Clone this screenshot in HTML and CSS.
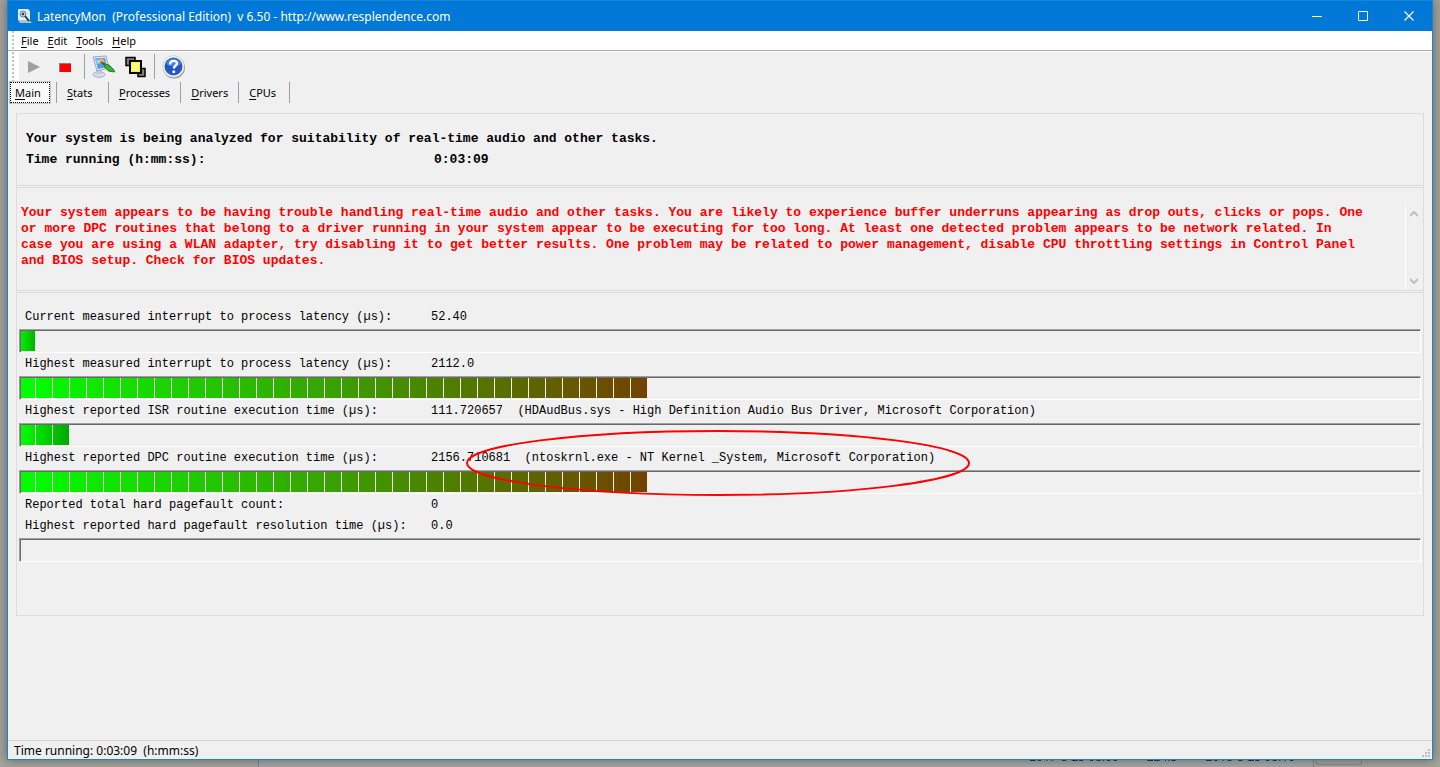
FILE: index.html
```html
<!DOCTYPE html>
<html lang="en">
<head>
<meta charset="utf-8">
<title>LatencyMon</title>
<link rel="stylesheet" href="styles.css">
</head>
<body>
<div class="window">
  <header class="titlebar">
    <svg class="app-icon" viewBox="0 0 16 16" width="16" height="16" aria-hidden="true">
      <path d="M1 1h10l2 2v9H1z" fill="#e4eef6"/>
      <path d="M1 12h11l3 3H3z" fill="#a9c3da"/>
      <circle cx="6" cy="6" r="3" fill="#b9cad9" stroke="#6f879c"/>
      <circle cx="6" cy="6" r="1.200" fill="#25384a"/>
      <path d="M8 8l4 5" stroke="#27384b" stroke-width="2"/>
    </svg>
    <h1 class="title">LatencyMon&nbsp; (Professional Edition)&nbsp; v 6.50 - http://www.resplendence.com</h1>
    <div class="window-buttons">
      <button class="window-button" aria-label="Minimize"><svg width="11" height="11" viewBox="0 0 11 11"><path d="M0 5.500h10" stroke="#fff"/></svg></button>
      <button class="window-button" aria-label="Maximize"><svg width="11" height="11" viewBox="0 0 11 11"><path d="M.5.5h9v9h-9z" fill="none" stroke="#fff"/></svg></button>
      <button class="window-button" aria-label="Close"><svg width="11" height="11" viewBox="0 0 11 11"><path d="M.5.5l9 9m0-9l-9 9" stroke="#fff" stroke-width="1.200"/></svg></button>
    </div>
  </header>
  <nav class="menubar" aria-label="Menu">
    <span class="grip"></span>
    <button class="menu"><u>F</u>ile</button>
    <button class="menu"><u>E</u>dit</button>
    <button class="menu"><u>T</u>ools</button>
    <button class="menu"><u>H</u>elp</button>
  </nav>
  <div class="toolbar">
    <span class="grip"></span>
    <button class="tool" aria-label="Start"><svg width="24" height="24" viewBox="0 0 24 24"><path d="M6 6l12 6-12 6z" fill="#a0a0a0"/></svg></button>
    <button class="tool" aria-label="Stop"><svg width="24" height="24" viewBox="0 0 24 24"><path d="M6 8h12v9H6z" fill="#808080"/><path d="M7 9h11v8H7z" fill="#f00"/></svg></button>
    <span class="separator"></span>
    <button class="tool" aria-label="Options"><svg width="24" height="24" viewBox="0 0 24 24">
      <ellipse cx="7" cy="19.500" rx="6" ry="2.800" fill="#d9dcec" stroke="#a9aec8"/>
      <path d="M4 14h6v5H4z" fill="#c3c8df"/>
      <path d="M1 2l13-1 3 12-12 3z" fill="#dfe5f5" stroke="#9aa6c8"/>
      <path d="M3 3.500l10-.5 2 9-9 2z" fill="#4a9fe6"/>
      <path d="M4 5l6-1 1 3-6 2z" fill="#9fd3f7"/>
      <path d="M7 5l4-1 2 3-4 2z" fill="#f3b53d"/>
      <path d="M9 7l6 4" stroke="#7a4a18" stroke-width="2"/>
      <path d="M12 9l5 1 5 5 .5 2-6-1-4-4z" fill="#3fae3a" stroke="#1d7a26"/>
    </svg></button>
    <button class="tool" aria-label="Windows"><svg width="24" height="24" viewBox="0 0 24 24">
      <path d="M3 2.500h9v8H3zM15 13.500h7v8h-7z" fill="#808080" stroke="#000" stroke-width="1.500"/>
      <path d="M7 6h11v12H7z" fill="#ff0" stroke="#000" stroke-width="2"/>
      <path d="M9 8h7v8H9z" fill="#fff98c"/>
    </svg></button>
    <span class="separator"></span>
    <button class="tool" aria-label="Help"><svg width="24" height="24" viewBox="0 0 24 24">
      <circle cx="12" cy="12.500" r="11" fill="#8a8f9a"/>
      <circle cx="11.500" cy="11.500" r="10.800" fill="#f4f6fb" stroke="#b4bac8" stroke-width=".6"/>
      <circle cx="11.500" cy="11.500" r="9" fill="#2457c4"/>
      <path d="M4 9a8 8 0 0 1 15 0c-4 3-11 3-15 0z" fill="#4a80e0"/>
      <path d="M8 9.500c0-5 7.500-4.500 7-.7-.4 2-3.200 2-3.200 4.700" fill="none" stroke="#fff" stroke-width="2.400"/>
      <circle cx="11.800" cy="16.700" r="1.500" fill="#fff"/>
    </svg></button>
  </div>
  <div class="tabs" role="tablist">
    <button class="tab-active" role="tab" aria-selected="true"><u>M</u>ain</button>
    <button class="tab" role="tab"><u>S</u>tats</button>
    <button class="tab" role="tab"><u>P</u>rocesses</button>
    <button class="tab" role="tab"><u>D</u>rivers</button>
    <button class="tab" role="tab"><u>C</u>PUs</button>
  </div>
  <main class="content">
    <section class="panel summary">
      <p>Your system is being analyzed for suitability of real-time audio and other tasks.</p>
      <p class="reading"><span>Time running (h:mm:ss):</span><span>0:03:09</span></p>
    </section>
    <section class="panel report">
      <p class="warning">Your system appears to be having trouble handling real-time audio and other tasks. You are likely to experience buffer underruns appearing as drop outs, clicks or pops. One or more DPC routines that belong to a driver running in your system appear to be executing for too long. At least one detected problem appears to be network related. In case you are using a WLAN adapter, try disabling it to get better results. One problem may be related to power management, disable CPU throttling settings in Control Panel and BIOS setup. Check for BIOS updates.</p>
      <div class="scroller">
        <svg width="8" height="6" viewBox="0 0 8 6"><path d="M0 5l4-4 4 4" fill="none" stroke="#bfbfbf" stroke-width="2"/></svg>
        <svg width="8" height="6" viewBox="0 0 8 6"><path d="M0 1l4 4 4-4" fill="none" stroke="#bfbfbf" stroke-width="2"/></svg>
      </div>
    </section>
    <section class="panel meters">
      <p class="reading"><span>Current measured interrupt to process latency (µs):</span><span>52.40</span></p>
      <div class="track"><div class="fill fill-low"></div></div>
      <p class="reading"><span>Highest measured interrupt to process latency (µs):</span><span>2112.0</span></p>
      <div class="track"><div class="fill fill-high"></div></div>
      <p class="reading"><span>Highest reported ISR routine execution time (µs):</span><span>111.720657&nbsp; (HDAudBus.sys - High Definition Audio Bus Driver, Microsoft Corporation)</span></p>
      <div class="track"><div class="fill fill-medium"></div></div>
      <div class="marked">
        <p class="reading"><span>Highest reported DPC routine execution time (µs):</span><span>2156.710681&nbsp; (ntoskrnl.exe - NT Kernel _System, Microsoft Corporation)</span></p>
        <svg class="ring" width="504" height="66" viewBox="0 0 504 66" aria-hidden="true"><ellipse cx="252" cy="33" rx="251" ry="32" fill="none" stroke="#f00" stroke-width="2"/></svg>
      </div>
      <div class="track"><div class="fill fill-high"></div></div>
      <p class="reading"><span>Reported total hard pagefault count:</span><span>0</span></p>
      <p class="reading"><span>Highest reported hard pagefault resolution time (µs):</span><span>0.0</span></p>
      <div class="track"></div>
    </section>
  </main>
  <footer class="statusbar">
    <span>Time running: 0:03:09&nbsp; (h:mm:ss)</span>
    <svg width="8" height="8" viewBox="0 0 8 8" aria-hidden="true"><path d="M6 0h2v2H6zM3 3h2v2H3zM6 3h2v2H6zM0 6h2v2H0zM3 6h2v2H3zM6 6h2v2H6z" fill="#bfbfbf"/></svg>
  </footer>
</div>
<div class="behind">
  <div class="behind-list"><span>2017-8-25 08:00</span><span>224.5</span><span>2018-8-25 08:10</span></div>
  <div class="behind-button"></div>
</div>
</body>
</html>
```
FILE: styles.css
```css
* { box-sizing: border-box; }
body {
  margin: 0;
  min-height: 100vh;
  display: flex;
  flex-direction: column;
  background: #a3a29b;
  color: #000;
  font: 12px "Noto Sans", "Open Sans", sans-serif;
}
h1, p { margin: 0; font-weight: inherit; }
button { border: 0; padding: 0; background: none; font: inherit; color: inherit; }
svg { display: block; flex: none; }
u { text-underline-offset: 2px; }

.window {
  flex: 1;
  display: flex;
  flex-direction: column;
  margin: 0 7px;
  border: 1px solid #1883d7;
  background: #f0f0f0;
  box-shadow: 0 0 10px rgba(0, 0, 0, 0.4);
  z-index: 1;
}

.titlebar {
  display: flex;
  align-items: center;
  height: 30px;
  padding-left: 9px;
  gap: 4px;
  background: #0078d7;
  color: #fff;
}
.title { flex: 1; font-size: 12px; white-space: nowrap; }
.window-buttons { display: flex; }
.window-button { width: 46px; height: 30px; display: grid; place-items: center; }

.grip {
  align-self: stretch;
  width: 2px;
  background: repeating-linear-gradient(#c0c0c0 0 2px, transparent 2px 4px);
}
.menubar {
  display: flex;
  align-items: center;
  gap: 9px;
  height: 20px;
  padding-left: 4px;
  background: #fff;
  border-bottom: 1px solid #aaa;
  font-size: 11px;
}
.menubar .grip { margin-right: -2px; }
.toolbar {
  display: flex;
  align-items: center;
  height: 30px;
  padding-left: 4px;
  gap: 7px;
  border-top: 1px solid #fff;
  background: linear-gradient(#fff, #fff) 0 0 / 11px 100% no-repeat;
}
.toolbar .grip { margin-right: 1px; }
.tool { width: 24px; height: 24px; }
.separator { width: 1px; height: 25px; background: #a0a0a0; }

.tabs { display: flex; height: 23px; padding: 1px 2px; font-size: 11px; }
.tab {
  min-width: 52px;
  padding: 0 10px;
  border-left: 1px solid #a0a0a0;
  text-align: left;
}
.tab:last-child { border-right: 1px solid #a0a0a0; }
.tab-active {
  width: 40px;
  margin-right: 6px;
  padding: 0 4px;
  border: 1px dotted #000;
  outline: 1px solid #c8c8c8;
  background: #fafafa;
  text-align: left;
}

.content {
  flex: 1;
  padding: 9px 8px;
  font-family: "Liberation Mono", "Courier New", monospace;
}
.panel { border: 1px solid #dcdcdc; margin-bottom: 1px; }
.reading { display: grid; grid-template-columns: 406px 1fr; white-space: nowrap; }
.summary {
  padding: 14px 9px 15px;
  font-size: 13px;
  font-weight: bold;
  line-height: 21px;
}
.summary .reading { grid-template-columns: 408px 1fr; }
.report {
  display: flex;
  justify-content: space-between;
  height: 104px;
  padding: 17px 2px 0 4px;
}
.warning {
  max-width: 172ch;
  font-size: 13px;
  font-weight: bold;
  line-height: 16px;
  color: #f00;
}
.scroller {
  width: 16px;
  display: flex;
  flex-direction: column;
  justify-content: space-between;
  align-items: center;
  padding: 6px 0;
  border-left: 1px solid #fff;
}

.meters { padding: 14px 2px 52px; font-size: 12px; line-height: 21px; }
.meters .reading { padding-left: 6px; }
.track {
  height: 24px;
  margin: 1px 0;
  padding: 1px;
  border: 1px solid;
  border-color: #a0a0a0 #fff #fff #a0a0a0;
  box-shadow: inset 1px 1px #696969;
}
.fill {
  height: 20px;
  background:
    repeating-linear-gradient(90deg, transparent 0 16px, #f0f0f0 16px 17px) -2px 0 / 1700px 100%,
    linear-gradient(90deg, var(--from), var(--to));
}
.fill-low { width: 14px; --from: #00f000; --to: #00b400; }
.fill-medium { width: 48px; --from: #00ff00; --to: #00a800; }
.fill-high { width: 626px; --from: #00ff00; --to: #734200; }
.marked { position: relative; }
.ring { position: absolute; left: 447px; top: -18px; z-index: 1; }

.statusbar {
  display: flex;
  justify-content: space-between;
  align-items: center;
  height: 19px;
  padding: 0 2px 0 6px;
  border-top: 1px solid #d4d4d4;
}
.statusbar svg { align-self: flex-end; margin-bottom: 2px; }

.behind { display: flex; height: 7px; padding-left: 258px; }
.behind-list {
  flex: 1;
  display: flex;
  gap: 28px;
  justify-content: flex-end;
  padding-right: 18px;
  border: 1px solid #858585;
  border-width: 0 1px;
  background: #a6a6a6;
  color: #223a55;
  line-height: 16px;
}
.behind-list span { margin-top: -11px; }
.behind-button {
  width: 46px;
  height: 5px;
  margin: 0 78px 0 2px;
  border: 1px solid #888;
  border-top: 0;
  border-radius: 0 0 3px 3px;
}
```
